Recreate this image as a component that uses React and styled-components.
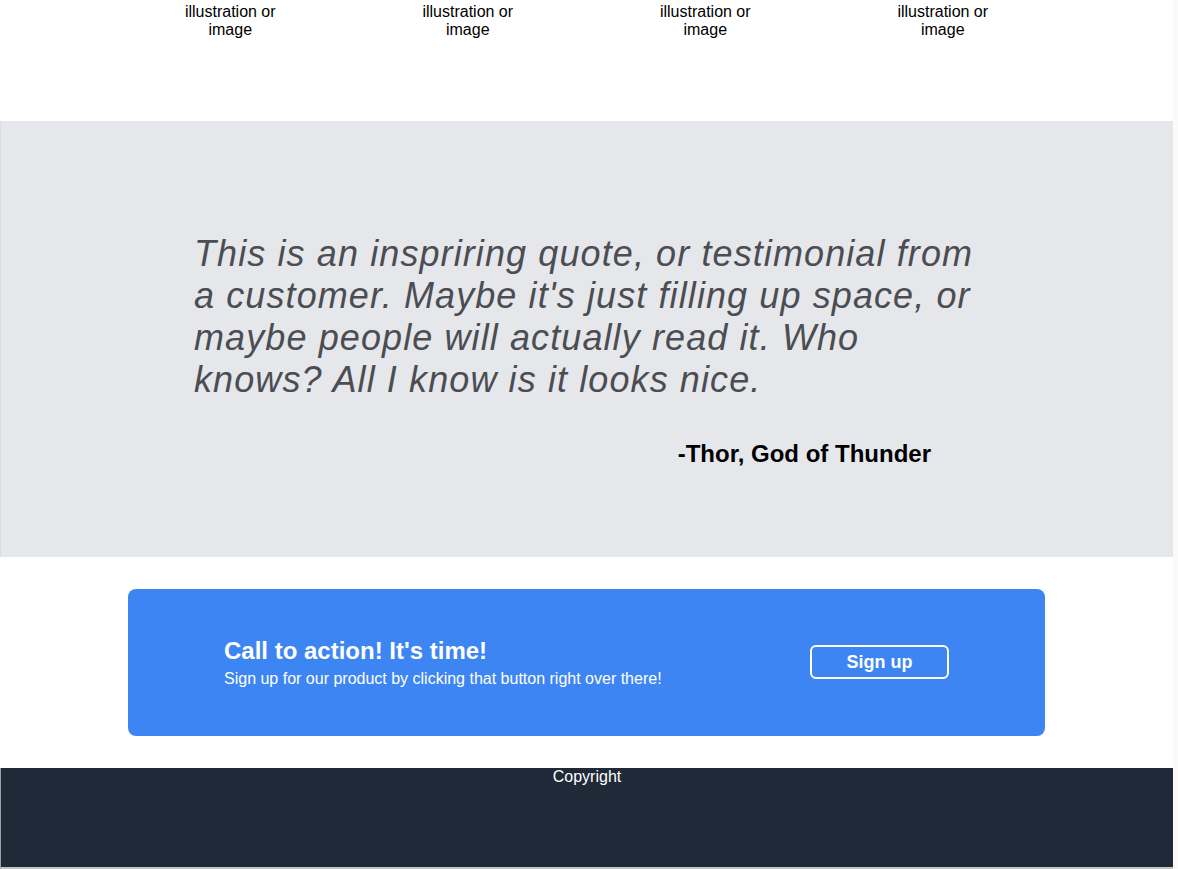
import React from 'react'
import styled, { createGlobalStyle } from 'styled-components'

const GlobalStyle = createGlobalStyle`
  * { box-sizing: border-box; }
  body {
    margin: 0;
    background: #fafafa;
    font-family: "Liberation Sans", Arial, Helvetica, sans-serif;
    color: #000;
  }
`

const Page = styled.div`
  width: 1173px;
  background: #fff;
`

const Features = styled.section`
  height: 121px;
  padding-top: 3px;
`

const FeatureGrid = styled.div`
  width: 950px;
  margin: 0 auto;
  display: grid;
  grid-template-columns: repeat(4, 1fr);
`

const Feature = styled.div`
  justify-self: center;
  width: 120px;
  text-align: center;
  font-size: 16px;
  line-height: normal;
`

const QuoteSection = styled.section`
  background: #e5e7eb;
  height: 436px;
  padding-top: 112px;
  border-left: 1px solid #dcdde0;
`

const QuoteBlock = styled.figure`
  width: 788px;
  margin: 0 auto;
  padding-left: 1px;
`

const Quote = styled.blockquote`
  margin: 0;
  font-size: 36px;
  line-height: normal;
  font-style: italic;
  letter-spacing: 1.1px;
  color: #4b4d52;
`

const Author = styled.figcaption`
  margin-top: 37px;
  padding-right: 50px;
  text-align: right;
  font-size: 24px;
  line-height: 32px;
  font-weight: 700;
`

const CtaWrap = styled.section`
  padding: 32px 0;
`

const Cta = styled.div`
  width: 917px;
  height: 147px;
  margin: 0 0 0 128px;
  padding: 0 96px;
  border-radius: 8px;
  background: #3d85f3;
  color: #fff;
  display: flex;
  align-items: center;
  justify-content: space-between;
`

const CtaText = styled.div`
  display: flex;
  flex-direction: column;
`

const CtaTitle = styled.h2`
  margin: 0;
  font-size: 24px;
  line-height: 32px;
  font-weight: 700;
`

const CtaSub = styled.p`
  margin: 0;
  font-size: 16px;
  line-height: 24px;
`

const SignUp = styled.button`
  width: 139px;
  height: 34px;
  margin-top: -1px;
  border: 2px solid #fff;
  border-radius: 6px;
  background: transparent;
  color: #fff;
  font-family: inherit;
  font-size: 18px;
  font-weight: 700;
  cursor: pointer;
`

const Footer = styled.footer`
  height: 101px;
  background: #1f2937;
  color: #fff;
  text-align: center;
  font-size: 16px;
  line-height: 18px;
  padding-top: 0;
  border-left: 1px solid #9aa0a8;
  border-bottom: 2px solid #c4c4c4;
`

const features = ['illustration or image', 'illustration or image', 'illustration or image', 'illustration or image']

const App = () => {
  return (
    <>
      <GlobalStyle />
      <Page>
        <Features>
          <FeatureGrid>
            {features.map((f, i) => (
              <Feature key={i}>{f}</Feature>
            ))}
          </FeatureGrid>
        </Features>

        <QuoteSection>
          <QuoteBlock>
            <Quote>
              This is an inspriring quote, or testimonial from a customer. Maybe it's just filling up space, or maybe people will actually read it. Who knows? All I know is it looks nice.
            </Quote>
            <Author>-Thor, God of Thunder</Author>
          </QuoteBlock>
        </QuoteSection>

        <CtaWrap>
          <Cta>
            <CtaText>
              <CtaTitle>Call to action! It's time!</CtaTitle>
              <CtaSub>Sign up for our product by clicking that button right over there!</CtaSub>
            </CtaText>
            <SignUp>Sign up</SignUp>
          </Cta>
        </CtaWrap>

        <Footer>Copyright</Footer>
      </Page>
    </>
  )
}

export default App
